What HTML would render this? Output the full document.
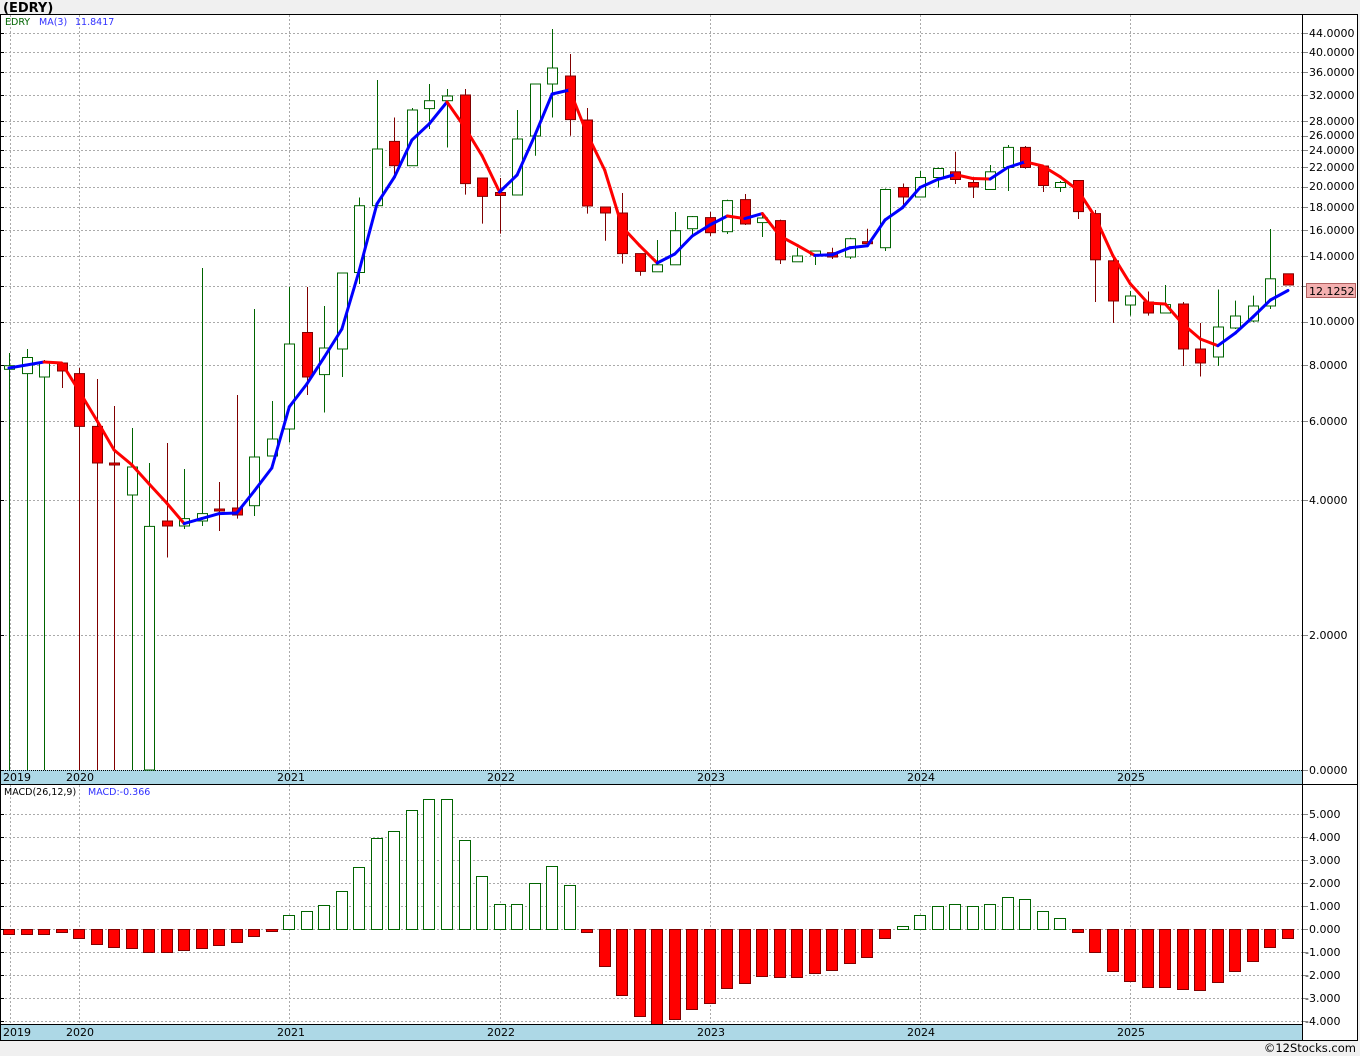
<!DOCTYPE html>
<html><head><meta charset="utf-8"><style>
html,body{margin:0;padding:0;background:#f0f0f0;}
body{width:1360px;height:1056px;position:relative;overflow:hidden;font-family:"DejaVu Sans","Liberation Sans",sans-serif;}
svg{position:absolute;left:0;top:0;}
</style></head><body>
<svg id="s" width="1360" height="1056" xmlns="http://www.w3.org/2000/svg" font-family="DejaVu Sans, Liberation Sans, sans-serif" font-size="11">
<rect x="0" y="14" width="1358" height="1027" fill="#fff"/>
<text x="3" y="12" font-size="13" font-weight="bold" fill="#000">(EDRY)</text>
<g id="grid" stroke="#aaa" stroke-dasharray="2,2" stroke-width="1"></g>
<rect x="1" y="770" width="1301" height="14" fill="#add8e6"/>
<line x1="1" y1="770.5" x2="1302" y2="770.5" stroke="#000" stroke-dasharray="1,1"/>
<rect x="1" y="1025" width="1301" height="15" fill="#add8e6"/>
<g id="c"></g>
<g id="m"></g>
<g font-size="11" fill="#000">
<text x="3" y="781">2019</text><text x="66" y="781">2020</text><text x="277" y="781">2021</text><text x="487" y="781">2022</text><text x="697" y="781">2023</text><text x="907" y="781">2024</text><text x="1117" y="781">2025</text>
<text x="3" y="1036">2019</text><text x="66" y="1036">2020</text><text x="277" y="1036">2021</text><text x="487" y="1036">2022</text><text x="697" y="1036">2023</text><text x="907" y="1036">2024</text><text x="1117" y="1036">2025</text>
</g>
<text x="5" y="25" font-size="9.5" fill="#006400">EDRY</text>
<text x="39" y="25" font-size="9.5" fill="#3030ff">MA(3)</text>
<text x="75" y="25" font-size="9.5" fill="#3030ff">11.8417</text>
<text x="4" y="795" font-size="9.5" fill="#000">MACD(26,12,9)</text>
<text x="88" y="795" font-size="9.5" fill="#3030ff">MACD:-0.366</text>
<g id="ax" fill="#000" font-size="11">
<text x="1309" y="37">44.0000</text><text x="1309" y="56">40.0000</text><text x="1309" y="76">36.0000</text><text x="1309" y="99">32.0000</text><text x="1309" y="125">28.0000</text><text x="1309" y="139">26.0000</text><text x="1309" y="154">24.0000</text><text x="1309" y="171">22.0000</text><text x="1309" y="190">20.0000</text><text x="1309" y="211">18.0000</text><text x="1309" y="234">16.0000</text><text x="1309" y="260">14.0000</text><text x="1309" y="325">10.0000</text><text x="1309" y="369">8.0000</text><text x="1309" y="425">6.0000</text><text x="1309" y="504">4.0000</text><text x="1309" y="639">2.0000</text><text x="1309" y="774">0.0000</text>
<text x="1309" y="818">5.000</text><text x="1309" y="841">4.000</text><text x="1309" y="864">3.000</text><text x="1309" y="887">2.000</text><text x="1309" y="910">1.000</text><text x="1309" y="933">0.000</text><text x="1305" y="956">-1.000</text><text x="1305" y="979">-2.000</text><text x="1305" y="1002">-3.000</text><text x="1305" y="1025">-4.000</text>
</g>
<rect x="1306.5" y="283.5" width="49" height="14" fill="#f4b0b0" stroke="#b06060"/>
<text x="1309" y="295" font-size="11" fill="#000">12.1252</text>
<g stroke="#000" stroke-width="1" fill="none">
<rect x="0.5" y="14.5" width="1357" height="1026"/>
<line x1="1302.5" y1="14" x2="1302.5" y2="1041"/>
<line x1="0" y1="784.5" x2="1358" y2="784.5"/>
<line x1="0" y1="1024.5" x2="1302" y2="1024.5"/>
</g>
<text x="1356" y="1052" font-size="11.5" text-anchor="end" fill="#000">©12Stocks.com</text>
</svg>
<script>
var NS="http://www.w3.org/2000/svg";
function el(p,t,a){var e=document.createElementNS(NS,t);for(var k in a)e.setAttribute(k,a[k]);p.appendChild(e);return e;}
var g=document.getElementById('grid');
var py=[33,52,72,95,121,135.5,150,167,186.5,207,230,256,286,321.5,365,421,500,635];
py.forEach(function(y){y=Math.round(y)+.5;el(g,'line',{x1:1,y1:y,x2:1302,y2:y});});
[814,837,860,883,906,929,952,975,998,1021].forEach(function(y){y+=.5;el(g,'line',{x1:1,y1:y,x2:1302,y2:y});});
[10,79,289,500,710,920,1130].forEach(function(x){x+=.5;el(g,'line',{x1:x,y1:15,x2:x,y2:770});el(g,'line',{x1:x,y1:785,x2:x,y2:1024});});
var ax=document.getElementById('ax');
py.concat([770,814,837,860,883,906,929,952,975,998,1021]).forEach(function(y){y=Math.round(y)+.5;el(ax,'line',{x1:1302,y1:y,x2:1308,y2:y,stroke:'#888'});el(ax,'line',{x1:1,y1:y,x2:4,y2:y,stroke:'#000'});});
// candles: [type, bodyTop, bodyBot, hi, lo]
var C=[["G",365.7,369.3,353,770],["G",357.5,373.6,349,770],["G",362,377,360,770],["R",363,371,363,388],["R",373.6,426.4,368,770],["R",426.4,463,379,770],["R",463,465,406,770],["G",467,495,428,770],["G",526.4,770,463,770],["R",521,526,443,557.5],["G",518.6,526,469,529],["G",513.6,521,268,526],["R",509,511,482,531],["R",508,515,395,518.6],["G",457,505.7,309,516],["G",439,456,401,456],["G",344,429,287,442.5],["R",332.5,377,287,395],["G",348,374.6,306,412.5],["G",273,349,273,377],["G",205.7,272.5,197.5,284],["G",149,205.7,80,205.7],["R",141.4,165.7,117.5,176],["G",110,165.7,108,165.7],["G",100.7,108.6,84,129],["G",96,100.7,89,147.5],["R",95,183.6,89,194.6],["R",178,196.4,178,223.6],["R",192.5,195.5,178,233.6],["G",139,195,110,195],["G",84,136,84,155.7],["G",68,84,29,117.5],["R",76,119.6,54,135.7],["R",120,206,108,213.6],["R",207,213,207,240.7],["R",213,253.6,193,263.6],["R",253.6,271.4,253.6,275.7],["G",264.8,271.8,240,271.8],["G",230.7,264.8,212,264.8],["G",216.6,228.7,216,236],["R",217.6,232.7,212,236],["G",200.6,231.7,199.6,234],["R",199.6,224,194,225],["G",218,222.6,213.6,237],["R",220.6,259.8,219.6,264],["G",256,261.8,247.7,261.8],["G",251,255,251,265],["R",252.7,257,247.7,259],["G",238.7,257,237.7,259],["R",241.7,243.7,228.7,243.7],["G",189.5,247.7,188.5,251],["R",187.5,197,183.5,207.6],["G",177.5,197,170.8,197],["G",168.5,177.5,167.5,187.5],["R",171.8,179.5,151.7,184],["R",182.5,187,176.8,198],["G",171.8,189.5,165,189.5],["G",147.4,167.5,145,191],["R",147.4,167.5,146,168.8],["R",166,185.5,166,192],["G",182.5,187.5,181,192],["R",180.5,211.6,180.5,219],["R",213.6,259.8,210,302],["R",260.8,301,256,323],["G",296,305,290.9,315.6],["R",302,313,291.5,315.6],["G",304.6,313,285,313],["R",304,349,302,366],["R",349,363,323,376.5],["G",327,357,289.5,366],["G",316,328,300.6,329],["G",306,321,295.6,322],["G",278.8,306,229,309],["R",273.8,285,273.8,285]];
var cg=document.getElementById('c');
function X(i){return 9+17.52*i;}
C.forEach(function(c,i){var x=Math.round(X(i))+.5;var red=c[0]=="R";var wc=red?"#800000":"#006400";
 el(cg,'line',{x1:x,y1:c[3],x2:x,y2:c[4],stroke:wc});
 var h=Math.max(c[2]-c[1],1.5);
 el(cg,'rect',{x:x-5,y:c[1],width:10,height:h,fill:red?"#ff0000":"#fff",stroke:red?"#800000":"#006400"});});
var MA=[368,365,362,363,391,420,450,464.6,484,503,523.6,518.6,513.6,513,491,468,406.8,384,357,329,270,204,177,140,123.6,102,127,155.7,192,175,136,94,90,134,170,227,245.7,263,254,236,225,216,218.6,213.6,236,245.4,255.4,254.7,247.7,245.7,220,207.6,187.5,179.5,174.5,178.5,179,167.5,161.8,166,176.8,190,217,255.4,283.8,303,304,324,339,345.7,333,317,300,290.5];
for(var i=0;i<MA.length-1;i++){el(cg,'line',{x1:X(i),y1:MA[i],x2:X(i+1),y2:MA[i+1],stroke:MA[i+1]>MA[i]?"#ff0000":"#0000ff","stroke-width":3,"stroke-linecap":"round"});}
var M=[934,934,934,932,938,944,947,948,952,952,950,948,945,942,936,931,915,911,905,891,867,838,831,810,799,799,840,876,904,904,883,866,885,932,966,995,1016,1024,1019,1009,1003,988,983,976,977,977,973,970,963,957,938,926,915,906,904,906,904,897,899,911,918,932,952,971,981,987,987,989,990,982,971,961,947,938];
var mg=document.getElementById('m');
M.forEach(function(v,i){var x=Math.round(X(i))-5.5;var red=v>929;
 var y=red?929:v, h=Math.abs(v-929);
 el(mg,'rect',{x:x,y:y+.5,width:11,height:h,fill:red?"#ff0000":"#fff",stroke:red?"#800000":"#006400"});});
</script>
</body></html>
